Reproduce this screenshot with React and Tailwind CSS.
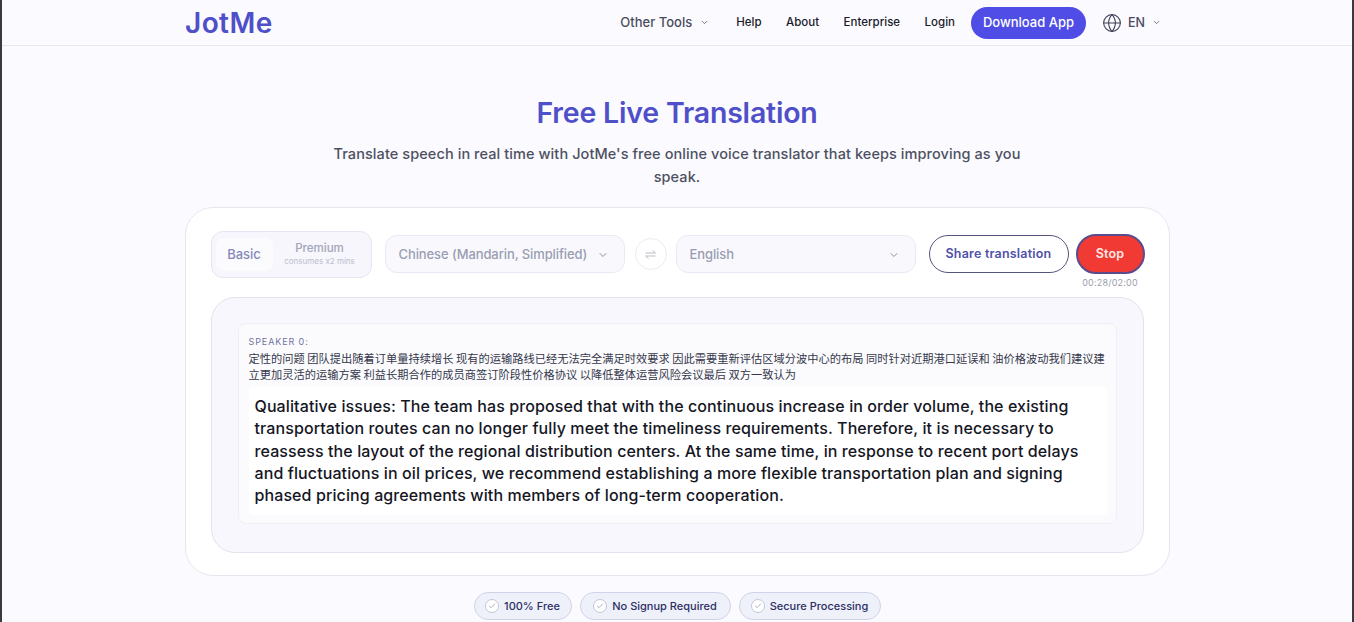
import { ChevronDown, Globe, Check } from "lucide-react";

const navLinks = ["Help", "About", "Enterprise", "Login"];
const badges = [
  { label: "100% Free", width: "w-[98px]" },
  { label: "No Signup Required", width: "w-[151px]" },
  { label: "Secure Processing", width: "w-[142px]" },
];

function LangSelect({ label, width }) {
  return (
    <div className={`flex h-[38px] ${width} shrink-0 items-center justify-between rounded-xl border border-[#e9e9f3] bg-[#f9f9fd] pl-[13px] pr-[15px] pt-px`}>
      <span className="whitespace-nowrap text-[13px] font-medium tracking-[-0.1px] text-[#9a9db2]">{label}</span>
      <ChevronDown size={12} className="text-[#8e90a6]" />
    </div>
  );
}

export default function App() {
  return (
    <div className="h-[622px] overflow-hidden border-l-2 border-r-2 border-l-[#3a3a3e] border-r-[#3a3a3e] bg-[#fbfaff] font-['Inter',sans-serif]">
      <header className="flex h-[46px] justify-center border-b border-[#e8e8ec]">
        <div className="flex w-[984px] items-center justify-between pr-[8px]">
          <div className="text-[28px] font-semibold leading-none tracking-[0.4px] text-[#4f50c9]">JotMe</div>
          <nav className="flex items-center">
            <div className="flex items-center gap-[7px] text-[13px] font-medium text-[#4a4d5e]">
              Other Tools
              <ChevronDown size={9} className="ml-[1px]" />
            </div>
            <div className="ml-[27px] flex items-center gap-[24.5px] text-[11.5px] font-medium text-[#1a1b2b]">
              {navLinks.map((link) => (
                <span key={link}>{link}</span>
              ))}
            </div>
            <button className="ml-[16px] h-[32px] w-[115px] rounded-full bg-[#4f4de6] text-[13px] font-medium text-white">
              Download App
            </button>
            <Globe size={20} strokeWidth={1.3} className="ml-[16px] text-[#3c3f52]" />
            <span className="ml-[6px] pt-px text-[12.5px] font-medium text-[#4a4d5e]">EN</span>
            <ChevronDown size={9} className="ml-[7px] text-[#4a4d5e]" />
          </nav>
        </div>
      </header>

      <main className="flex flex-col items-center">
        <h1 className="mt-[47px] text-[28.5px] font-semibold leading-[40px] tracking-[-0.2px] text-[#4f50c9]">
          Free Live Translation
        </h1>
        <p className="mt-[9px] text-center text-[14.5px] font-medium leading-[23px] tracking-[0.08px] text-[#4d5161]">
          Translate speech in real time with JotMe's free online voice translator that keeps improving as you
          <br />
          speak.
        </p>

        <section className="mt-[19px] w-[985px] rounded-[28px] border border-[#e6e6ee] bg-white px-[25px] pt-[23px] pb-[22px]">
          <div className="flex h-[66px] items-start">
            <div className="flex h-[47px] w-[161px] shrink-0 items-center rounded-xl border border-[#e6e6f2] bg-[#f6f6fc] px-[4px]">
              <div className="flex h-[33px] w-[57px] items-center justify-center rounded-lg bg-[#fbfbfe] text-[13px] font-medium text-[#8788b8]">
                Basic
              </div>
              <div className="flex flex-1 flex-col items-center">
                <span className="text-[11.5px] font-medium leading-[13px] text-[#a3a5b8]">Premium</span>
                <span className="text-[8px] leading-[12px] text-[#bcbecd]">consumes x2 mins</span>
              </div>
            </div>
            <div className="ml-[13px] mt-[3px] flex shrink-0 items-center">
              <LangSelect label="Chinese (Mandarin, Simplified)" width="w-[240px]" />
              <div className="ml-[10px] mr-[9px] flex h-[32px] w-[32px] items-center justify-center rounded-full border border-[#ebebf2] bg-white">
                <svg width="11" height="9" viewBox="0 0 11 9" fill="none" stroke="#bcbdca" strokeWidth="1" className="block">
                  <path d="M0.5 3h10M7.5 0.5L10.5 3" />
                  <path d="M0.5 6h10M0.5 6l3 2.5" />
                </svg>
              </div>
              <LangSelect label="English" width="w-[240px]" />
              <button className="ml-[13px] h-[38px] w-[140px] rounded-full border border-[#54557f] bg-white pt-px text-[12.5px] font-semibold tracking-[0.2px] text-[#4f51a8]">
                Share translation
              </button>
              <div className="relative ml-[7px]">
                <button className="h-[40px] w-[69px] rounded-full border-2 border-[#5b4a8c] bg-[#f23a35] pt-px text-[12.5px] font-semibold tracking-[0.2px] text-[#ffe9e6]">
                  Stop
                </button>
                <span className="absolute left-1/2 top-[42px] -translate-x-1/2 whitespace-nowrap text-[9px] tracking-[0.2px] text-[#9b9dab]">
                  00:28/02:00
                </span>
              </div>
            </div>
          </div>

          <div className="rounded-[24px] border border-[#e3e3ee] bg-[#f7f7fd] px-[26px] pt-[25px] pb-[28px]">
            <div className="rounded-lg border border-[#efeff6] bg-[#fbfbfe] pl-[10px] pr-[9px] pt-[12px] pb-[8px]">
              <div className="text-[9px] font-normal leading-[12px] tracking-[0.9px] text-[#7173a0]">SPEAKER 0:</div>
              <div className="mt-[2px] whitespace-nowrap font-['Noto_Sans_CJK_SC','Inter',sans-serif] text-[11.25px] leading-[16px] text-[#35374a]">
                定性的问题 团队提出随着订单量持续增长 现有的运输路线已经无法完全满足时效要求 因此需要重新评估区域分波中心的布局 同时针对近期港口延误和 油价格波动我们建议建
                <br />
                立更加灵活的运输方案 利益长期合作的成员商签订阶段性价格协议 以降低整体运营风险会议最后 双方一致认为
              </div>
              <div className="mt-[5px] rounded-sm bg-white px-[6px] pt-[8px] pb-[9px] text-[16px] font-medium leading-[22.3px] tracking-[0.1px] text-[#15161f]">
                Qualitative issues: The team has proposed that with the continuous increase in order volume, the existing
                <br />
                transportation routes can no longer fully meet the timeliness requirements. Therefore, it is necessary to
                <br />
                reassess the layout of the regional distribution centers. At the same time, in response to recent port delays
                <br />
                and fluctuations in oil prices, we recommend establishing a more flexible transportation plan and signing
                <br />
                phased pricing agreements with members of long-term cooperation.
              </div>
            </div>
          </div>
        </section>

        <div className="mt-[16px] flex gap-[8px]">
          {badges.map((badge) => (
            <div
              key={badge.label}
              className={`flex h-[28px] ${badge.width} items-center justify-center gap-[5px] whitespace-nowrap rounded-full border border-[#d0d3e6] bg-[#eff1fa] text-[11px] font-medium text-[#2c2f63]`}
            >
              <span className="flex h-[14px] w-[14px] items-center justify-center rounded-full border border-[#c4c6d6] bg-white">
                <Check size={8} className="text-[#85879c]" />
              </span>
              {badge.label}
            </div>
          ))}
        </div>
      </main>
    </div>
  );
}
